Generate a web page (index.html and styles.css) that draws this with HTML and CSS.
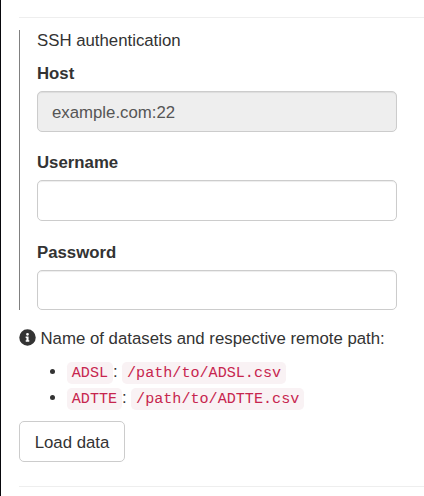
FILE: index.html
```html
<!DOCTYPE html>
<html lang="en">
<head>
<meta charset="utf-8">
<title>Load data</title>
<link rel="stylesheet" href="styles.css">
</head>
<body>
<main class="panel">
  <hr class="rule">
  <form class="auth">
    <p class="title">SSH authentication</p>
    <label class="label" for="host">Host</label>
    <input class="input host" id="host" type="text" value="example.com:22" disabled>
    <label class="label" for="user">Username</label>
    <input class="input" id="user" type="text">
    <label class="label" for="pass">Password</label>
    <input class="input last" id="pass" type="password">
  </form>
  <p class="info"><svg class="icon" viewBox="0 0 512 512"><path fill="currentColor" fill-rule="evenodd" d="M256 8a248 248 0 1 0 0 496a248 248 0 1 0 0-496zm0 110a42 42 0 1 1 0 84a42 42 0 1 1 0-84zm56 254c0 7-5 12-12 12h-88c-7 0-12-5-12-12v-24c0-7 5-12 12-12h12v-64h-12c-7 0-12-5-12-12v-24c0-7 5-12 12-12h64c7 0 12 5 12 12v100h12c7 0 12 5 12 12z"/></svg>Name of datasets and respective remote path:</p>
  <ul class="datasets">
    <li><code>ADSL</code>: <code>/path/to/ADSL.csv</code></li>
    <li><code>ADTTE</code>: <code>/path/to/ADTTE.csv</code></li>
  </ul>
  <button class="button" type="button">Load data</button>
  <hr class="rule">
</main>
</body>
</html>
```
FILE: styles.css
```css
* { box-sizing: border-box; }
body {
  margin: 0;
  background: #fff;
  color: #333;
  font: 16.8px/24px "Liberation Sans", Arial, sans-serif;
}
.panel {
  height: 496px;
  overflow: hidden;
  border-left: 1px solid #08080c;
  padding: 17px 0 0 18px;
}
.rule {
  margin: 0;
  border: 0;
  border-top: 1px solid #eee;
}
.auth {
  height: 280px;
  margin-top: 12px;
  border-left: 1px solid #808080;
  padding: 0 27px 0 17px;
}
.title {
  margin: 0;
  height: 31px;
  line-height: 22px;
}
.label {
  display: block;
  height: 30px;
  line-height: 26px;
  font-weight: bold;
}
.input {
  display: block;
  width: 100%;
  height: 41px;
  margin: 0 0 19px;
  border: 1px solid #ccc;
  border-radius: 5px;
  padding: 8px 14px 6px;
  background: #fff;
  color: #555;
  font: inherit;
  box-shadow: inset 0 1px 1px rgba(0, 0, 0, .075);
}
.input:disabled { background: #eee; }
.host { margin-bottom: 18px; }
.last {
  height: 40px;
  margin: 0;
}
.info {
  display: flex;
  align-items: center;
  gap: 4.5px;
  margin: 17px 0 0;
}
.icon {
  width: 17px;
  height: 17px;
  margin-bottom: 3px;
}
.datasets {
  margin: 8px 0 0;
  padding-left: 48px;
  line-height: 26px;
}
code {
  padding: 2.4px 4.8px;
  border-radius: 4.8px;
  background: #f9f2f4;
  color: #c7254e;
  font: 15.12px "Liberation Mono", monospace;
}
.button {
  display: block;
  width: 106px;
  height: 41px;
  margin: 10px 0 24px;
  border: 1px solid #ccc;
  border-radius: 5px;
  padding: 2px 0 0;
  background: #fff;
  color: #333;
  font: inherit;
}
```
